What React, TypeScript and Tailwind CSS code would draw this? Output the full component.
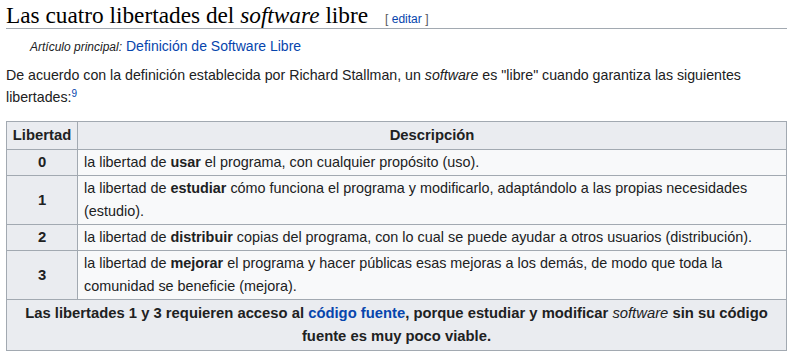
import React from "react";

const sans = "font-['Liberation_Sans',Arial,sans-serif]";

function App() {
  const rows = [
    {
      n: "0",
      pre: "la libertad de ",
      b: "usar",
      post: " el programa, con cualquier propósito (uso).",
    },
    {
      n: "1",
      pre: "la libertad de ",
      b: "estudiar",
      post: " cómo funciona el programa y modificarlo, adaptándolo a las propias necesidades (estudio).",
    },
    {
      n: "2",
      pre: "la libertad de ",
      b: "distribuir",
      post: " copias del programa, con lo cual se puede ayudar a otros usuarios (distribución).",
    },
    {
      n: "3",
      pre: "la libertad de ",
      b: "mejorar",
      post: " el programa y hacer públicas esas mejoras a los demás, de modo que toda la comunidad se beneficie (mejora).",
    },
  ];

  return (
    <div className={`bg-white px-[6px] text-[14.2px] text-[#202122] ${sans}`}>
      <h2 className="flex items-baseline border-b border-[#a2a9b1] pt-[2px] font-['Liberation_Serif',Georgia,serif] text-[23.3px] leading-[26px] font-normal text-black">
        <span>
          Las cuatro libertades del <i>software</i> libre
        </span>
        <span className={`ml-[17px] text-[12px] leading-none text-[#54595d] ${sans}`}>
          [ <a className="text-[#0645ad]">editar</a> ]
        </span>
      </h2>

      <div className="mt-[7px] pl-[24px] leading-[20px]">
        <i className="text-[12px]">Artículo principal:</i>{" "}
        <a className="text-[14px] text-[#0645ad]">Definición de Software Libre</a>
      </div>

      <p className="mt-[7px] leading-[22px]">
        De acuerdo con la definición establecida por Richard Stallman, un{" "}
        <i>software</i> es "libre" cuando garantiza las siguientes libertades:
        <sup className="text-[10px] leading-none text-[#0645ad]">9</sup>
      </p>

      <table className="mt-[13px] w-full border-collapse border border-[#a2a9b1] bg-[#f8f9fa] text-[14.4px] leading-[23px]">
        <thead>
          <tr className="bg-[#eaecf0]">
            <th className="w-[71px] border border-[#a2a9b1] px-[5px] py-[2px] text-center text-[14.8px] font-bold">
              Libertad
            </th>
            <th className="border border-[#a2a9b1] px-[6px] py-[2px] text-center text-[14.8px] font-bold">
              Descripción
            </th>
          </tr>
        </thead>
        <tbody>
          {rows.map((r) => (
            <tr key={r.n}>
              <td className="border border-[#a2a9b1] bg-[#eaecf0] px-[6px] py-[1px] text-center text-[14.8px] font-bold">
                {r.n}
              </td>
              <td className="border border-[#a2a9b1] px-[6px] py-[1px]">
                {r.pre}
                <b>{r.b}</b>
                {r.post}
              </td>
            </tr>
          ))}
          <tr className="bg-[#eaecf0]">
            <td
              colSpan={2}
              className="border border-[#a2a9b1] px-[16px] py-[2px] text-center text-[14.8px] font-bold"
            >
              Las libertades 1 y 3 requieren acceso al{" "}
              <a className="text-[#0645ad]">código fuente</a>, porque estudiar y
              modificar <i className="font-normal">software</i> sin su código
              fuente es muy poco viable.
            </td>
          </tr>
        </tbody>
      </table>
    </div>
  );
}

export default App;
